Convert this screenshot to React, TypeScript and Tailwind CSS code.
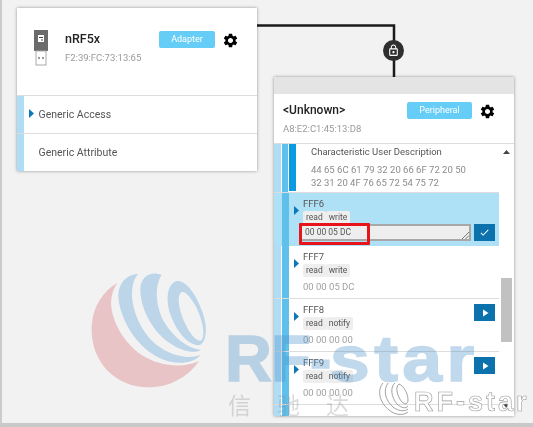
import { MdCheck, MdLockOutline, MdPlayArrow, MdSettings } from 'react-icons/md';

const sans = "font-['Roboto','Liberation_Sans',sans-serif]";

function Caret({ className = '' }: { className?: string }) {
  return (
    <svg width="5" height="9" viewBox="0 0 5 9" className={`shrink-0 ${className}`}>
      <path d="M0 0 L5 4.5 L0 9 Z" fill="#0b78b8" />
    </svg>
  );
}

function Tag({ label }: { label: string }) {
  return <span className="rounded-[2px] bg-[#eeeeee] px-[3px] text-[8.5px] leading-[13px] text-[#555]">{label}</span>;
}

function ActionButton({ check }: { check?: boolean }) {
  return (
    <button className="flex h-[17px] w-[21px] shrink-0 items-center justify-center bg-[#0b72ae] text-white">
      {check ? <MdCheck size={11} /> : <MdPlayArrow size={12} />}
    </button>
  );
}

function Badge({ label, width }: { label: string; width: string }) {
  return (
    <span className={`flex h-[17px] items-center justify-center rounded-[2px] bg-[#66cdf6] text-[9px] text-white ${width}`}>
      {label}
    </span>
  );
}

function UsbIcon() {
  return (
    <svg width="14" height="36" viewBox="0 0 14 36" className="shrink-0">
      <rect x="0" y="0" width="14" height="21" fill="#6b6b6b" />
      <rect x="4" y="5" width="6" height="7" fill="#fff" />
      <path d="M5 7.5 H9 M7 10 H9" stroke="#444" strokeWidth="1" />
      <rect x="2" y="21" width="10" height="14" fill="#fff" stroke="#aaa" strokeWidth="1" />
      <rect x="4" y="27" width="2" height="2" fill="#999" />
      <rect x="8" y="27" width="2" height="2" fill="#999" />
    </svg>
  );
}

function ServiceRow({ label, open }: { label: string; open?: boolean }) {
  return (
    <div className="flex h-[38px] border-t border-[#dddddd]">
      <div className="w-[7px] bg-[#aeddf5]" />
      <div className="flex w-[14px] items-center justify-center">{open && <Caret className="-mt-[2px]" />}</div>
      <span className="pl-[0.5px] pt-[1px] text-[10.5px] leading-[36px] text-[#555]">{label}</span>
    </div>
  );
}

function CharRow({
  name,
  props,
  value,
  action,
}: {
  name: string;
  props: string[];
  value: string;
  action?: boolean;
}) {
  return (
    <div className="flex h-[53px] border-b border-[#dddddd]">
      <div className="w-[7px] bg-[#aeddf5]" />
      <div className="ml-px w-[7px] bg-[#5fc0ec]" />
      <div className="flex w-[14px] justify-center pt-[13px]">
        <Caret />
      </div>
      <div className="flex-1 pt-[4px]">
        <div className="text-[9.5px] leading-[14px] text-[#555]">{name}</div>
        <div className="flex">
          {props.map((p) => (
            <Tag key={p} label={p} />
          ))}
        </div>
        <div className="mt-[3px] text-[9.5px] leading-[14px] text-[#a0a0a0]">{value}</div>
      </div>
      {action && (
        <div className="pr-[4px] pt-[5px]">
          <ActionButton />
        </div>
      )}
    </div>
  );
}

function ActiveRow() {
  return (
    <div className="flex h-[53px] bg-[#aee0f6]">
      <div className="w-[7px]" />
      <div className="ml-px w-[7px] bg-[#5fc0ec]" />
      <div className="flex w-[14px] justify-center pt-[13px]">
        <Caret />
      </div>
      <div className="flex-1 pt-[4px]">
        <div className="text-[9.5px] leading-[14px] text-[#555]">FFF6</div>
        <div className="flex">
          <Tag label="read" />
          <Tag label="write" />
        </div>
        <div className="-ml-[4px] flex gap-[3px]">
          <div className="relative h-[17px] w-[172px] border-2 border-[#a8a8a8] bg-[#eeeeee] pl-[4px] text-[8.5px] leading-[12px] text-[#555]">
            00 00 05 DC
            <svg width="8" height="8" viewBox="0 0 8 8" className="absolute bottom-0 right-0">
              <path d="M1 8 L8 1 M4.5 8 L8 4.5" stroke="#777" strokeWidth="1" />
            </svg>
          </div>
          <ActionButton check />
        </div>
      </div>
      <div className="w-[4px]" />
    </div>
  );
}

function Scrollbar() {
  return (
    <div className="flex w-[15px] flex-col items-center bg-white">
      <svg width="7" height="4" viewBox="0 0 7 4" className="mt-[6px]">
        <path d="M0 4 L3.5 0 L7 4 Z" fill="#444" />
      </svg>
      <div className="mt-[124px] h-[64px] w-[11px] bg-[#c1c1c1]" />
      <svg width="7" height="4" viewBox="0 0 7 4" className="mt-[62px]">
        <path d="M0 0 L3.5 4 L7 0 Z" fill="#444" />
      </svg>
    </div>
  );
}

function Watermark() {
  return (
    <>
      <svg width="210" height="167" viewBox="0 0 630 501" className="absolute left-[68px] top-[260px]">
        <path
          d="M143 68 C90 100 65 150 65 210 C65 310 140 382 235 382 C300 382 355 350 387 303 C340 325 270 320 215 285 C150 240 115 160 125 110 C128 92 135 78 143 68Z"
          fill="#e9c4c6"
        />
        <path
          d="M205 42 C170 42 145 70 145 110 C150 180 200 260 270 295 C320 318 370 310 392 285 C350 300 300 285 260 255 C210 215 180 140 187 85 C190 65 195 50 205 42Z"
          fill="#bdd5e8"
        />
        <path
          d="M275 45 C250 35 222 40 212 75 C205 130 240 210 300 250 C340 278 380 280 392 270 C350 265 310 230 285 190 C260 150 250 80 275 45Z"
          fill="#bdd5e8"
        />
        <path
          fillRule="evenodd"
          d="M320 63 C295 70 285 110 300 160 C320 220 360 260 390 255 C410 245 415 200 395 150 C375 95 345 60 320 63Z M335 97 C320 105 325 145 345 190 C360 225 385 250 395 240 C408 225 395 170 375 135 C360 110 345 92 335 97Z"
          fill="#bdd5e8"
        />
      </svg>
      <div className="pointer-events-none absolute left-[223px] top-[323px] whitespace-nowrap font-['Liberation_Sans',sans-serif] text-[65px] font-bold leading-[72px] tracking-[-1px] text-[#4f93c9] opacity-35 [-webkit-text-stroke:1.5px_#4f93c9]">
        RF-
        <span className="inline-block origin-left scale-x-[1.1] tracking-[4px]">star</span>
      </div>
      <div className="pointer-events-none absolute left-[226px] top-[390px] flex gap-[26px] font-['Noto_Sans_CJK_SC',sans-serif] text-[23px] leading-[28px] text-[#888]/30">
        <span>信</span>
        <span>驰</span>
        <span>达</span>
      </div>
      <svg width="34" height="36" viewBox="0 0 34 36" className="pointer-events-none absolute left-[375px] top-[382px]">
        <g fill="none" stroke="#8a8a8a" strokeWidth="0.8">
          <path d="M6 1 C0 8 2 20 12 28 C18 33 26 34 31 30" />
          <path d="M11 1 C6 8 8 18 16 25 C21 29 27 30 31 27" />
          <path d="M18 1 C13 5 14 15 20 22 C24 26 29 27 31 24" />
          <path d="M22 2 C18 5 20 14 25 20 C28 23 31 22 31 18 C31 12 27 4 22 2Z" />
        </g>
      </svg>
      <div className="pointer-events-none absolute left-[412px] top-[385px] whitespace-nowrap font-['Liberation_Sans',sans-serif] text-[27px] font-bold leading-[34px] tracking-[3px] text-white [-webkit-text-stroke:0.6px_#9a9a9a]">
        RF-star
      </div>
    </>
  );
}

export default function App() {
  return (
    <div className={`relative flex h-[427px] w-[533px] gap-[17px] overflow-hidden border-b-4 border-l-2 border-b-[#c8c8c8] border-l-[#cccccc] bg-[#f2f2f2] pl-[15px] pt-[8px] blur-[0.4px] ${sans}`}>
      {/* connector between adapter and peripheral */}
      <svg width="150" height="70" viewBox="0 0 150 70" className="absolute left-[255px] top-[8px]">
        <path d="M0 17.5 H137 V70" fill="none" stroke="#1b1b1b" strokeWidth="2.5" />
      </svg>
      <div className="absolute left-[381px] top-[40px] flex h-[21px] w-[21px] items-center justify-center rounded-full bg-[#2f2f2f] text-white">
        <MdLockOutline size={13} />
      </div>

      <section className="relative h-[163px] w-[240px] bg-white shadow-[0_0_3px_rgba(0,0,0,0.4)]">
        <div className="flex h-[87px] items-start pl-[17px] pt-[22px]">
          <UsbIcon />
          <div className="ml-[17px] w-[94px]">
            <div className="mt-[1px] text-[12.5px] font-medium leading-[16px] text-[#222]">nRF5x</div>
            <div className="mt-[4px] text-[9.5px] leading-[14px] text-[#9a9a9a]">F2:39:FC:73:13:65</div>
          </div>
          <Badge label="Adapter" width="w-[56px] mt-[1px]" />
          <MdSettings size={17} className="ml-[7px] mt-[2px] text-black" />
        </div>
        <ServiceRow label="Generic Access" open />
        <ServiceRow label="Generic Attribute" />
      </section>

      <section className="relative mt-[69px] flex h-[339px] w-[240px] flex-col bg-white shadow-[0_0_3px_rgba(0,0,0,0.4)]">
        <div className="h-[17px] bg-[#e4e4e4]" />
        <div className="flex h-[50px] items-start border-b border-[#dddddd] pl-[9px] pt-[8px]">
          <div className="w-[124px]">
            <div className="text-[12px] font-medium leading-[17px] text-[#222]">&lt;Unknown&gt;</div>
            <div className="mt-[3px] text-[9.5px] leading-[14px] text-[#9a9a9a]">A8:E2:C1:45:13:D8</div>
          </div>
          <Badge label="Peripheral" width="w-[65px]" />
          <MdSettings size={17} className="ml-[7px] mt-[1px] text-black" />
        </div>
        <div className="flex flex-1 overflow-hidden">
          <div className="flex-1 overflow-hidden">
            <div className="flex h-[49px] border-b border-[#dddddd]">
              <div className="w-[7px] bg-[#aeddf5]" />
              <div className="ml-px w-[6px] bg-[#5fc0ec]" />
              <div className="ml-px h-[47px] w-[7px] bg-[#0a9be0]" />
              <div className="pl-[15px] pt-[1px] text-[9.5px] text-[#555]">
                <div className="leading-[14px]">Characteristic User Description</div>
                <div className="mt-[4px] w-[170px] leading-[13px] text-[#8c8c8c]">
                  44 65 6C 61 79 32 20 66 6F 72 20 50
                  <br />
                  32 31 20 4F 76 65 72 54 75 72
                </div>
              </div>
            </div>
            <ActiveRow />
            <CharRow name="FFF7" props={['read', 'write']} value="00 00 05 DC" />
            <CharRow name="FFF8" props={['read', 'notify']} value="00 00 00 00" action />
            <CharRow name="FFF9" props={['read', 'notify']} value="00 00 00 00" action />
            <div className="flex h-[14px]">
              <div className="w-[7px] bg-[#aeddf5]" />
              <div className="ml-px w-[7px] bg-[#5fc0ec]" />
            </div>
          </div>
          <Scrollbar />
        </div>
      </section>

      {/* highlight around the written value */}
      <div className="absolute left-[297px] top-[223px] h-[22px] w-[71px] rounded-[1px] border-[3px] border-[#e8141c]" />

      <Watermark />
    </div>
  );
}
